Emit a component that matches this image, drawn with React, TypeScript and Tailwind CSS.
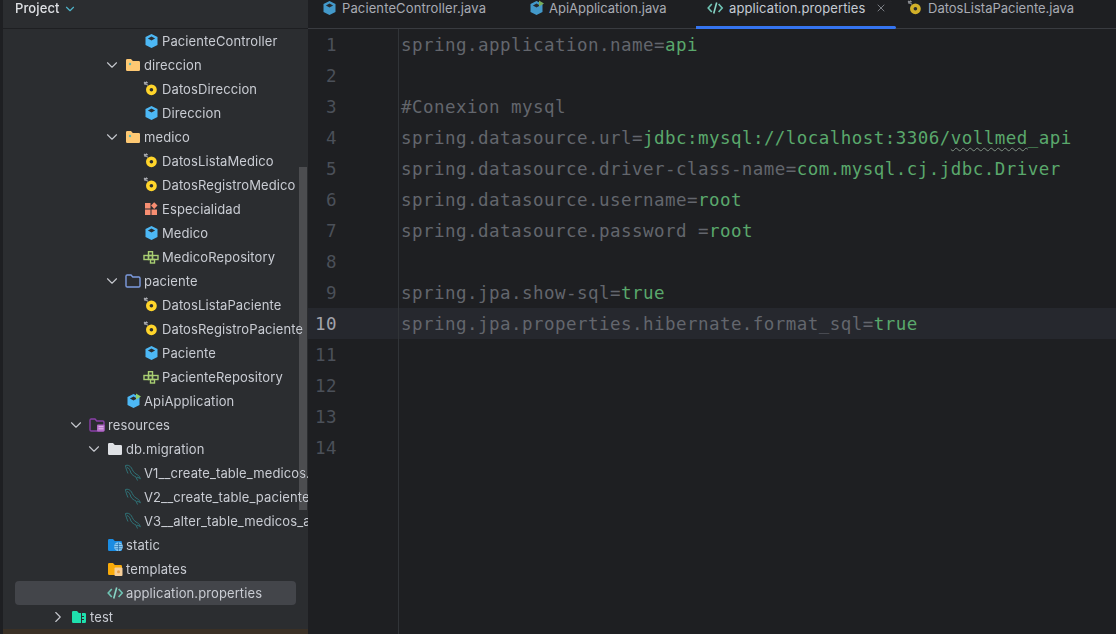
import { ChevronDown, ChevronRight, X } from "lucide-react";
import type { ReactNode } from "react";

const ClassIcon = ({ run = false }: { run?: boolean }) => (
  <svg width="16" height="16" viewBox="0 0 16 16" className="overflow-visible">
    <path d="M7.5 1 L13.5 4 V12 L7.5 15 L1.5 12 V4 Z" fill="#4db8f5" />
    <path d="M7.5 3.4 L11.1 5.4 L7.5 7.6 L3.9 5.4 Z" fill="#2b2d30" />
    {run && <path d="M10 0.5 L15 3.5 L10 6.5 Z" fill="#8fd16b" />}
  </svg>
);

const RecordIcon = () => (
  <svg width="16" height="16" viewBox="0 0 16 16" className="overflow-visible">
    <circle cx="7.4" cy="8.8" r="5.4" fill="#ffd52b" />
    <circle cx="7.4" cy="8.8" r="1.8" fill="#2b2d30" />
    <path d="M0 1 L3.8 4.4 M2.6 0.4 L1 3.8 M3.8 1.6 L0 3" stroke="#a9abb0" strokeWidth="1.1" />
  </svg>
);

const EnumIcon = () => (
  <svg width="16" height="16" viewBox="0 0 16 16">
    <rect x="1" y="2" width="5.5" height="5.5" fill="#f88e72" />
    <rect x="1" y="8.5" width="5.5" height="5.5" fill="#f88e72" />
    <rect x="7.5" y="8.5" width="5.5" height="5.5" fill="#f88e72" />
    <path d="M10.2 1.2 L13.5 4.6 L10.2 8 L7 4.6 Z" fill="#f88e72" />
  </svg>
);

const RepoIcon = () => (
  <svg width="16" height="16" viewBox="0 0 16 16" fill="none" stroke="#a9cf73" strokeWidth="1.4" className="overflow-visible">
    <rect x="4.5" y="2.7" width="4" height="3.8" />
    <rect x="0" y="6.5" width="4.5" height="4" />
    <rect x="4.5" y="6.5" width="4" height="4" />
    <rect x="8.5" y="6.5" width="5.5" height="4" />
    <rect x="6.5" y="10.5" width="4" height="3.5" />
  </svg>
);

const FOLDER = "M0 3.2 a1.2 1.2 0 0 1 1.2-1.2 H5 L6.8 4 H12.8 a1.2 1.2 0 0 1 1.2 1.2 V12.8 a1.2 1.2 0 0 1-1.2 1.2 H1.2 A1.2 1.2 0 0 1 0 12.8 Z";

const Folder = ({ fill, stroke, children }: { fill: string; stroke?: string; children?: ReactNode }) => (
  <svg width="16" height="16" viewBox="0 0 16 16" className="overflow-visible">
    <path d={FOLDER} fill={fill} stroke={stroke} strokeWidth={stroke ? 1.4 : 0} />
    {children}
  </svg>
);

const PackageIcon = () => (
  <Folder fill="#fdc873">
    <circle cx="4" cy="7" r="1.2" fill="#5fb8b0" />
  </Folder>
);

const OutlinePackageIcon = () => <Folder fill="none" stroke="#7e9ce0" />;

const ResourcesIcon = () => (
  <Folder fill="none" stroke="#8a3fa8">
    <rect x="7" y="7.5" width="7.5" height="7" rx="1" fill="#b46cc8" />
    <path d="M8.5 9.7 H13.5 M8.5 11.8 H13.5" stroke="#e4c4ec" strokeWidth="1" />
  </Folder>
);

const StaticIcon = () => (
  <Folder fill="#1a8ce2">
    <circle cx="10.5" cy="9.6" r="4.4" fill="#8fcdf5" />
    <path d="M6.2 9.6 H14.8 M10.5 5.4 V13.8 M7.4 7.4 H13.6 M7.4 11.8 H13.6" stroke="#1d6aa8" strokeWidth="0.7" />
  </Folder>
);

const TemplatesIcon = () => (
  <Folder fill="#f9ab0a">
    <rect x="6.5" y="6.5" width="8" height="8.5" rx="1" fill="#f6cf9a" />
    <circle cx="10.5" cy="10.7" r="1.5" fill="#e8a04a" />
  </Folder>
);

const TestIcon = () => (
  <Folder fill="#1fe0ae">
    <path d="M9.5 4 V14" stroke="#2b2d30" strokeWidth="1" />
    <path d="M9.5 7.5 H12 M9.5 10.5 H12" stroke="#2b2d30" strokeWidth="1" />
  </Folder>
);

const TagIcon = () => (
  <svg width="16" height="16" viewBox="0 0 16 16" fill="none" stroke="#6fc4b4" strokeWidth="1.6" className="overflow-visible">
    <path d="M3.8 4 L0.2 8 L3.8 12" />
    <path d="M10.6 4 L14.2 8 L10.6 12" />
    <path d="M8.7 2.5 L5.7 13.5" stroke="#8ad4c6" />
  </svg>
);

const DolphinIcon = () => (
  <svg width="16" height="16" viewBox="0 0 16 16" fill="none" stroke="#2f7378" strokeWidth="1" className="overflow-visible">
    <path d="M-0.5 0.5 C1.5 -0.3 4 0.5 5.5 3 C6.5 5 7.5 7.5 10 9 C12 10 13.5 11 14 13" />
    <path d="M-0.5 0.5 C-0.2 3 0.5 5 2 8.5" />
    <path d="M1 2.5 C3 3 4 5 5 8 C6 10 8 11 10 12 L11.5 15.5" />
    <path d="M11 12 L14.8 13.8" />
  </svg>
);

const tree = [
  { name: "PacienteController", icon: <ClassIcon />, pad: "pl-[118px]" },
  { name: "direccion", icon: <PackageIcon />, pad: "pl-[100px]", open: true },
  { name: "DatosDireccion", icon: <RecordIcon />, pad: "pl-[118px]" },
  { name: "Direccion", icon: <ClassIcon />, pad: "pl-[118px]" },
  { name: "medico", icon: <PackageIcon />, pad: "pl-[100px]", open: true },
  { name: "DatosListaMedico", icon: <RecordIcon />, pad: "pl-[118px]" },
  { name: "DatosRegistroMedico", icon: <RecordIcon />, pad: "pl-[118px]" },
  { name: "Especialidad", icon: <EnumIcon />, pad: "pl-[118px]" },
  { name: "Medico", icon: <ClassIcon />, pad: "pl-[118px]" },
  { name: "MedicoRepository", icon: <RepoIcon />, pad: "pl-[118px]" },
  { name: "paciente", icon: <OutlinePackageIcon />, pad: "pl-[100px]", open: true },
  { name: "DatosListaPaciente", icon: <RecordIcon />, pad: "pl-[118px]" },
  { name: "DatosRegistroPaciente", icon: <RecordIcon />, pad: "pl-[118px]" },
  { name: "Paciente", icon: <ClassIcon />, pad: "pl-[118px]" },
  { name: "PacienteRepository", icon: <RepoIcon />, pad: "pl-[118px]" },
  { name: "ApiApplication", icon: <ClassIcon run />, pad: "pl-[100px]" },
  { name: "resources", icon: <ResourcesIcon />, pad: "pl-[64px]", open: true },
  { name: "db.migration", icon: <Folder fill="#dfe1e5" />, pad: "pl-[82px]", open: true },
  { name: "V1__create_table_medicos.sql", icon: <DolphinIcon />, pad: "pl-[100px]" },
  { name: "V2__create_table_pacientes.sql", icon: <DolphinIcon />, pad: "pl-[100px]" },
  { name: "V3__alter_table_medicos_add_activo.sql", icon: <DolphinIcon />, pad: "pl-[100px]" },
  { name: "static", icon: <StaticIcon />, pad: "pl-[82px]" },
  { name: "templates", icon: <TemplatesIcon />, pad: "pl-[82px]" },
  { name: "application.properties", icon: <TagIcon />, pad: "ml-[12px] w-[281px] pl-[70px] rounded bg-[#43454a]" },
  { name: "test", icon: <TestIcon />, pad: "pl-[46px]", closed: true },
];

const Row = ({ item }: { item: (typeof tree)[number] }) => (
  <div className={`flex h-6 shrink-0 items-center whitespace-nowrap ${item.pad}`}>
    <span className="mr-[5px] flex w-[18px] shrink-0 justify-center text-[#c5c7cd]">
      {item.open && <ChevronDown size={18} strokeWidth={1.5} />}
      {item.closed && <ChevronRight size={18} strokeWidth={1.5} />}
    </span>
    <span className="mr-[2px] flex w-4 shrink-0 justify-center">{item.icon}</span>
    <span className="pt-[2px]">{item.name}</span>
  </div>
);

const Sidebar = () => (
  <aside className="relative flex w-[308px] shrink-0 flex-col overflow-hidden border-l-[3px] border-[#1e1f22] bg-[#2b2d30] text-[13px] tracking-[0.1px] text-[#c9ccd3]">
    <div className="flex h-[29px] shrink-0 items-start border-b border-[#1e1f22] pl-3 leading-4">
      <span className="font-medium text-[#dfe1e5]">Project</span>
      <ChevronDown size={14} className="ml-[3px] mt-[2px] text-[#4fb3c8]" />
    </div>
    <div className="flex min-h-0 flex-1 flex-col">
      {tree.map((item) => (
        <Row key={item.name} item={item} />
      ))}
    </div>
    <div className="h-[5px] shrink-0 bg-[#3a3025]" />
    {/* scrollbar thumb floats over the tree */}
    <div className="absolute right-px top-[167px] h-[343px] w-2 bg-[#4c4d50] mix-blend-lighten" />
  </aside>
);

const tabs = [
  { name: "PacienteController.java", icon: <ClassIcon />, cls: "w-[207px] tracking-[0.12px]" },
  { name: "ApiApplication.java", icon: <ClassIcon run />, cls: "w-[181px]" },
];

const TabBar = () => (
  <div className="flex h-[29px] shrink-0 items-start border-b border-[#393b40] text-[13px] leading-4 text-[#a8abb3]">
    {tabs.map((t) => (
      <div key={t.name} className={`flex items-center gap-1 pl-[14px] ${t.cls}`}>
        <span className="opacity-80">{t.icon}</span>
        <span>{t.name}</span>
      </div>
    ))}
    <div className="relative flex h-[29px] w-[200px] items-start pl-[12px] tracking-[0.12px] text-[#c5cad3]">
      <TagIcon />
      <span className="ml-[5px]">application.properties</span>
      <X size={12} strokeWidth={1.5} className="ml-[9px] mt-[2px] text-[#9a9da4]" />
      <div className="absolute inset-x-0 bottom-0 h-[3px] rounded-r-sm bg-[#3574f0]" />
    </div>
    <div className="flex items-center gap-1 pl-[12px]">
      <span className="opacity-80">
        <RecordIcon />
      </span>
      <span>DatosListaPaciente.java</span>
    </div>
  </div>
);

type Part = { t: string; k?: "val" | "typo" };

const code: Part[][] = [
  [{ t: "spring.application.name=" }, { t: "api", k: "val" }],
  [],
  [{ t: "#Conexion mysql" }],
  [
    { t: "spring.datasource.url=" },
    { t: "jdbc:mysql://localhost:3306/", k: "val" },
    { t: "vollmed", k: "typo" },
    { t: "_api", k: "val" },
  ],
  [{ t: "spring.datasource.driver-class-name=" }, { t: "com.mysql.cj.jdbc.Driver", k: "val" }],
  [{ t: "spring.datasource.username=" }, { t: "root", k: "val" }],
  [{ t: "spring.datasource.password =" }, { t: "root", k: "val" }],
  [],
  [{ t: "spring.jpa.show-sql=" }, { t: "true", k: "val" }],
  [{ t: "spring.jpa.properties.hibernate.format_sql=" }, { t: "true", k: "val" }],
  [],
  [],
  [],
  [],
];

const partClass = (k?: Part["k"]) => {
  if (k === "val") return "text-[#5aa86c]";
  if (k === "typo") return "text-[#5aa86c] underline decoration-wavy decoration-[#7f8f84] decoration-[0.6px] underline-offset-[3px]";
  return "";
};

const Editor = () => (
  <main className="relative flex min-w-0 flex-1 flex-col bg-[#1e1f22]">
    <TabBar />
    <div className="flex-1 font-['DejaVu_Sans_Mono',monospace] text-[17.5px] leading-[33px] tracking-[0.46px] text-[#63666d]">
      {code.map((parts, i) => {
        const current = i === 9;
        return (
          <div key={i} className={`flex h-[31px] whitespace-pre ${current ? "bg-[#26282e]" : ""}`}>
            <div className={`w-[29px] shrink-0 text-right ${current ? "text-[#a1a3ab]" : "text-[#4b5059]"}`}>{i + 1}</div>
            <div className="ml-[61px] w-[3px] shrink-0 border-l border-[#313438]" />
            <div>
              {parts.map((p, j) => (
                <span key={j} className={partClass(p.k)}>
                  {p.t}
                </span>
              ))}
            </div>
          </div>
        );
      })}
      <div className="ml-[90px] h-[200px] border-l border-[#313438]" />
    </div>
  </main>
);

export default function App() {
  return (
    <div className="flex h-[634px] w-[1116px] overflow-hidden bg-[#1e1f22] font-['Inter',sans-serif]">
      <Sidebar />
      <Editor />
    </div>
  );
}
